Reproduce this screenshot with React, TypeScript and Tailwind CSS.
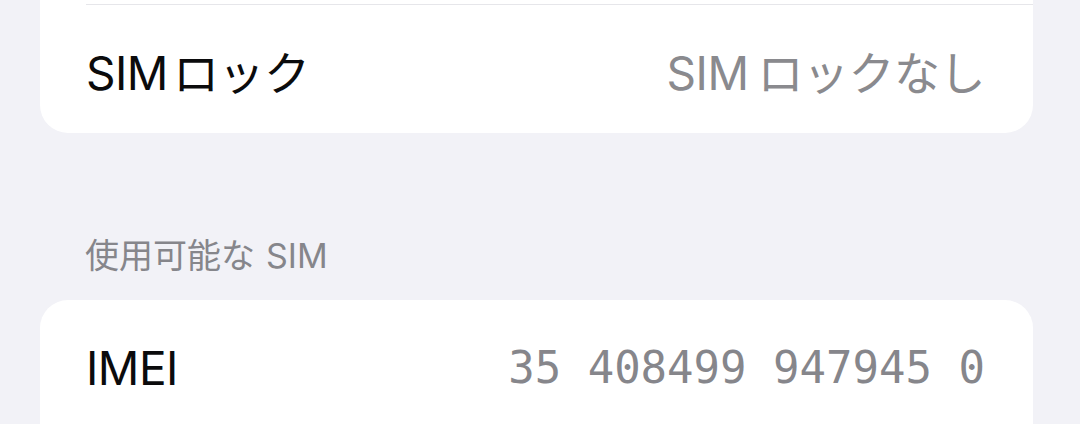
import React from 'react';

const font = { fontFamily: 'Inter, "Noto Sans CJK JP", sans-serif' };

const Row: React.FC<{ label: React.ReactNode; value: React.ReactNode; mono?: boolean }> = ({ label, value, mono }) => (
    <div className="flex items-center justify-between h-[128px] pt-[8px] pl-[46px] pr-[48px]">
        <span className="text-[46px] text-[#0b0b0c] tracking-[-0.5px]">{label}</span>
        <span
            className={mono ? 'text-[44px] text-[#86868b] font-["DejaVu_Sans_Mono",monospace]' : 'text-[46px] text-[#8a8a8e] tracking-[-0.5px]'}
        >
            {value}
        </span>
    </div>
);

// latin + kana with the small gap iOS puts between scripts
const Mixed: React.FC<{ latin: string; kana: string; gap: string }> = ({ latin, kana, gap }) => (
    <>
        {latin}
        <span className={gap}>{kana}</span>
    </>
);

export default function App() {
    return (
        <div className="w-[1080px] h-[424px] overflow-hidden bg-[#f2f2f7] pl-[40px] pr-[47px]" style={font}>
            {/* cellular settings group, scrolled so only its last row shows */}
            <div className="bg-white rounded-b-[28px] pt-[4px]">
                <div className="ml-[46px] h-px bg-[#e6e6ea]" />
                <Row
                    label={<Mixed latin="SIM" kana="ロック" gap="ml-[5px]" />}
                    value={<Mixed latin="SIM" kana="ロックなし" gap="ml-[9px]" />}
                />
            </div>

            <div className="pl-[45px] pt-[101px] pb-[22px] text-[34px] leading-[44px] text-[#86868b]">
                使用可能な<span className="ml-[11px]">SIM</span>
            </div>

            <div className="bg-white rounded-t-[28px]">
                <Row label="IMEI" value="35 408499 947945 0" mono />
            </div>
        </div>
    );
}
